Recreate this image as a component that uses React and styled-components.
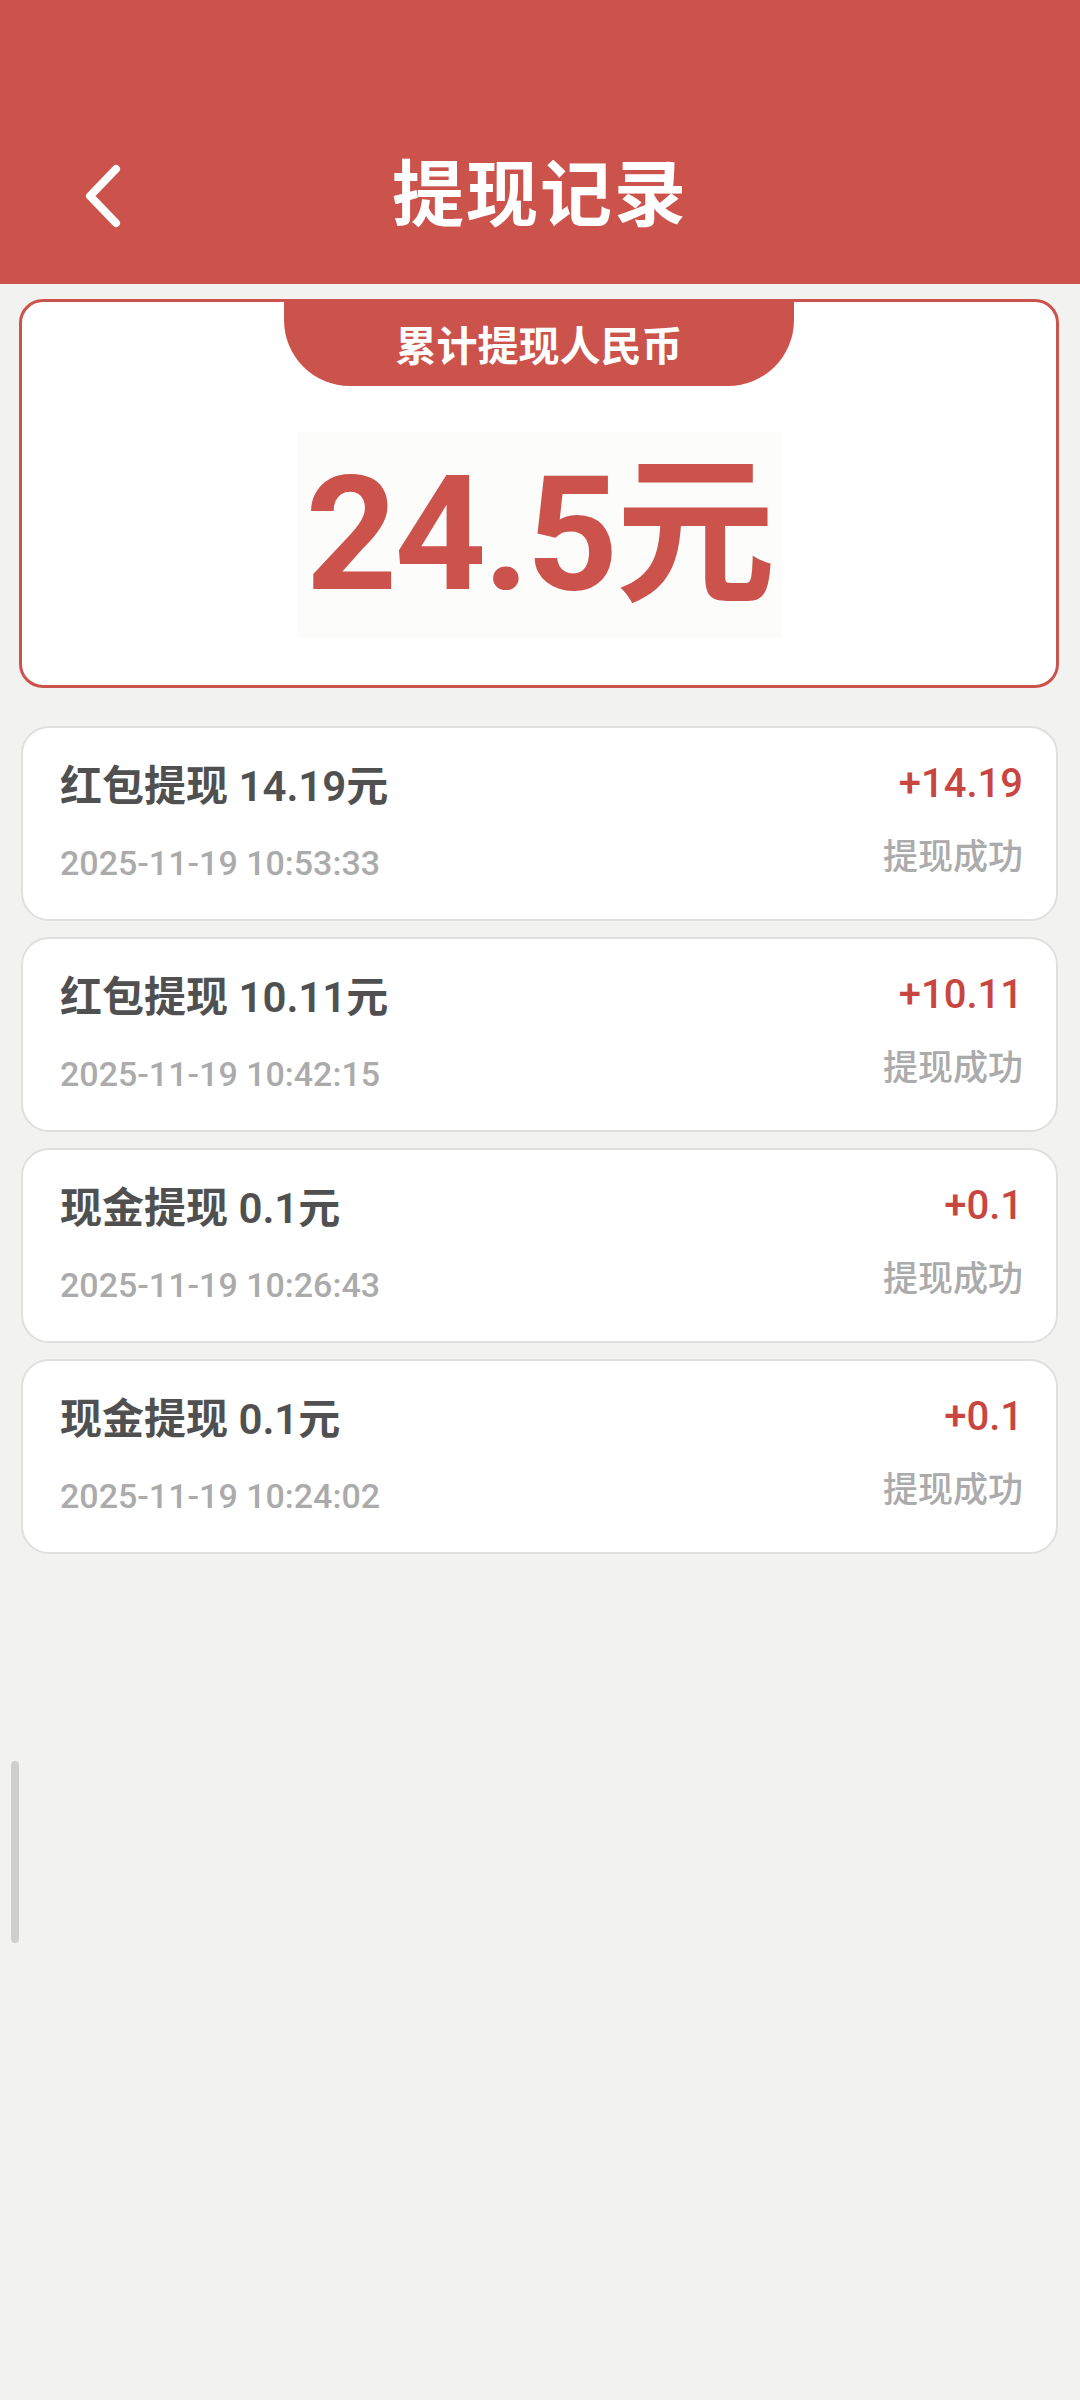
import React from 'react';
import styled, { createGlobalStyle } from 'styled-components';

const GlobalStyle = createGlobalStyle`
  html, body {
    margin: 0;
    padding: 0;
    background-color: #f2f3f1;
  }
  body {
    font-family: Roboto, "Noto Sans CJK SC", "Noto Sans", sans-serif;
  }
`;

const Page = styled.div`
  min-height: 2400px;
  background-color: #f2f3f1;
`;

const Header = styled.header`
  height: 284px;
  box-sizing: border-box;
  padding-top: 150px;
  background-color: #cc524c;
`;

const NavBar = styled.div`
  height: 92px;
  display: grid;
  grid-template-columns: 1fr auto 1fr;
  align-items: center;
`;

const BackButton = styled.button`
  justify-self: start;
  margin-left: 84px;
  padding: 0;
  border: none;
  background: none;
  display: flex;
  align-items: center;
  cursor: pointer;
`;

const Title = styled.h1`
  margin: 0;
  color: #fff;
  font-size: 72px;
  font-weight: 700;
  letter-spacing: 2px;
  line-height: 92px;
`;

const SummaryCard = styled.section`
  margin: 15px 21px 0 19px;
  height: 389px;
  box-sizing: border-box;
  border: 3px solid #cc524c;
  border-radius: 24px;
  background-color: #fff;
  display: flex;
  flex-direction: column;
  align-items: center;
`;

const Tab = styled.div`
  margin-top: -2px;
  width: 510px;
  height: 86px;
  border-radius: 0 0 66px 66px;
  background-color: #cc524c;
  color: #fff;
  font-size: 41px;
  font-weight: 700;
  display: flex;
  align-items: center;
  justify-content: center;
`;

const AmountBox = styled.div`
  margin-top: 46px;
  width: 485px;
  height: 206px;
  background-color: #fcfcfb;
  display: flex;
  align-items: center;
  justify-content: center;
`;

const Amount = styled.div`
  color: #cc524c;
  font-size: 160px;
  font-weight: 700;
  line-height: 1;
  letter-spacing: -3px;
  white-space: nowrap;
`;

const List = styled.div`
  margin: 38px 22px 0 21px;
  display: flex;
  flex-direction: column;
  gap: 16px;
`;

const RecordCard = styled.div`
  height: 195px;
  box-sizing: border-box;
  padding: 33px 33px 0 37px;
  border: 2px solid #dfe0de;
  border-radius: 28px;
  background-color: #fff;
  display: flex;
  justify-content: space-between;
`;

const Column = styled.div`
  display: flex;
  flex-direction: column;
  align-items: ${(p) => (p.$right ? 'flex-end' : 'flex-start')};
`;

const RecordTitle = styled.div`
  color: #505050;
  font-size: 42px;
  font-weight: 600;
  line-height: 52px;
`;

const RecordDate = styled.div`
  margin-top: 27px;
  color: #ababab;
  font-size: 34px;
  font-weight: 500;
  line-height: 46px;
`;

const RecordAmount = styled.div`
  color: #c9453f;
  font-size: 40px;
  font-weight: 500;
  line-height: 46px;
`;

const RecordStatus = styled.div`
  margin-top: 28px;
  color: #ababab;
  font-size: 35px;
  font-weight: 500;
  line-height: 46px;
`;

const ScrollThumb = styled.div`
  position: fixed;
  left: 11px;
  top: 1761px;
  width: 8px;
  height: 182px;
  border-radius: 4px;
  background-color: #cfcfcf;
`;

const records = [
  { id: 1, title: '红包提现 14.19元', time: '2025-11-19 10:53:33', amount: '+14.19' },
  { id: 2, title: '红包提现 10.11元', time: '2025-11-19 10:42:15', amount: '+10.11' },
  { id: 3, title: '现金提现 0.1元', time: '2025-11-19 10:26:43', amount: '+0.1' },
  { id: 4, title: '现金提现 0.1元', time: '2025-11-19 10:24:02', amount: '+0.1' },
];

const BackIcon = () => (
  <svg width="38" height="64" viewBox="0 0 38 64" fill="none">
    <polyline
      points="32,5 6,32 32,59"
      stroke="#fff"
      strokeWidth="8"
      strokeLinecap="round"
      strokeLinejoin="round"
    />
  </svg>
);

const App = () => {
  return (
    <Page>
      <GlobalStyle />
      <Header>
        <NavBar>
          <BackButton aria-label="返回">
            <BackIcon />
          </BackButton>
          <Title>提现记录</Title>
          <div />
        </NavBar>
      </Header>

      <SummaryCard>
        <Tab>累计提现人民币</Tab>
        <AmountBox>
          <Amount>24.5元</Amount>
        </AmountBox>
      </SummaryCard>

      <List>
        {records.map((r) => (
          <RecordCard key={r.id}>
            <Column>
              <RecordTitle>{r.title}</RecordTitle>
              <RecordDate>{r.time}</RecordDate>
            </Column>
            <Column $right>
              <RecordAmount>{r.amount}</RecordAmount>
              <RecordStatus>提现成功</RecordStatus>
            </Column>
          </RecordCard>
        ))}
      </List>

      <ScrollThumb />
    </Page>
  );
};

export default App;
